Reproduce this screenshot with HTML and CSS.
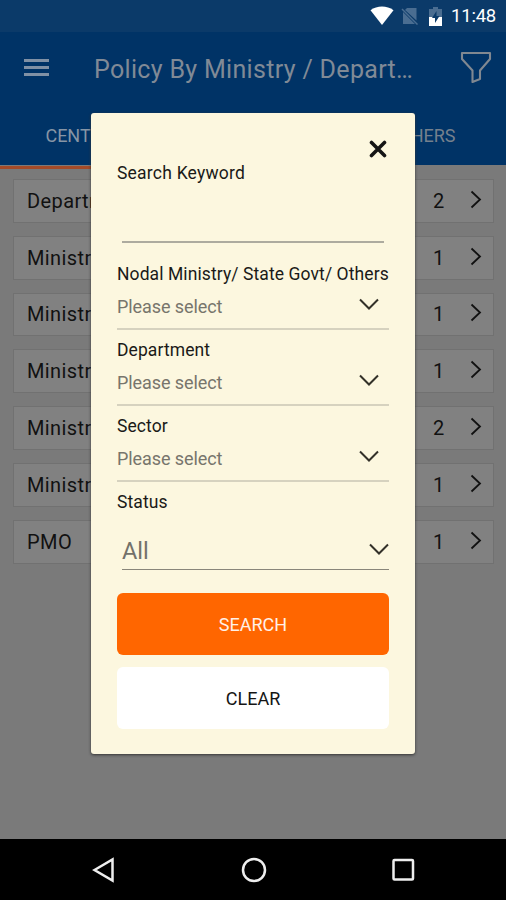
FILE: index.html
```html
<!DOCTYPE html>
<html lang="en">
<head>
<meta charset="utf-8">
<title>Policy By Ministry / Department</title>
<link rel="stylesheet" href="styles.css">
</head>
<body>
<div class="screen">
  <div class="status-bar">
    <svg class="wifi" width="24" height="20" viewBox="0 0 24 20"><path d="M.5 4.200C7-.7 17-.7 23.500 4.200L12 19z" fill="#fff"/></svg>
    <svg class="sim" width="18" height="18" viewBox="0 0 18 18"><path d="M6 1h9.500v12.500L4 3zM2 5l12 12H2z" fill="#4a6d91"/><path d="M1 2l15.500 15.500" stroke="#4a6d91" stroke-width="1.500"/></svg>
    <svg class="battery" width="13" height="19" viewBox="0 0 13 19"><path d="M4 0h5v2h4v17H0V2h4z" fill="#4a6d91"/><path d="M0 10h13v9H0z" fill="#fff"/><path d="M7.500 4L3 11h3v5l4.500-7h-3z" fill="#0b3a69"/></svg>
    <span class="time">11:48</span>
  </div>
  <header class="app-bar">
    <svg class="menu" width="25" height="18" viewBox="0 0 25 18"><path d="M0 1.500h25M0 8.500h25M0 15.500h25" stroke="#8091a5" stroke-width="3"/></svg>
    <h1 class="title">Policy By Ministry / Depart…</h1>
    <svg class="filter" width="32" height="33" viewBox="0 0 32 33"><path d="M2 2h28v6L20 19.500v8.500L12.500 31V19.500L2 8z" fill="none" stroke="#808891" stroke-width="2.100" stroke-linejoin="round"/></svg>
  </header>
  <nav class="tabs">
    <span class="tab tab-active">CENTRAL</span>
    <span class="tab">STATE</span>
    <span class="tab">OTHERS</span>
  </nav>
  <main class="list">
    <div class="row"><span class="name">Department</span><span class="count">2</span><svg class="next" width="12" height="19" viewBox="0 0 12 19"><path d="M1.500 1.500l8.500 8-8.500 8"/></svg></div>
    <div class="row"><span class="name">Ministry</span><span class="count">1</span><svg class="next" width="12" height="19" viewBox="0 0 12 19"><path d="M1.500 1.500l8.500 8-8.500 8"/></svg></div>
    <div class="row"><span class="name">Ministry</span><span class="count">1</span><svg class="next" width="12" height="19" viewBox="0 0 12 19"><path d="M1.500 1.500l8.500 8-8.500 8"/></svg></div>
    <div class="row"><span class="name">Ministry</span><span class="count">1</span><svg class="next" width="12" height="19" viewBox="0 0 12 19"><path d="M1.500 1.500l8.500 8-8.500 8"/></svg></div>
    <div class="row"><span class="name">Ministry</span><span class="count">2</span><svg class="next" width="12" height="19" viewBox="0 0 12 19"><path d="M1.500 1.500l8.500 8-8.500 8"/></svg></div>
    <div class="row"><span class="name">Ministry</span><span class="count">1</span><svg class="next" width="12" height="19" viewBox="0 0 12 19"><path d="M1.500 1.500l8.500 8-8.500 8"/></svg></div>
    <div class="row"><span class="name">PMO</span><span class="count">1</span><svg class="next" width="12" height="19" viewBox="0 0 12 19"><path d="M1.500 1.500l8.500 8-8.500 8"/></svg></div>
  </main>
  <footer class="nav-bar">
    <svg width="24" height="26" viewBox="0 0 24 26"><path d="M2.500 13L20.500 2.500v21z"/></svg>
    <svg width="26" height="26" viewBox="0 0 26 26"><circle cx="13" cy="13" r="11"/></svg>
    <svg width="24" height="26" viewBox="0 0 24 26"><rect x="2.500" y="3" width="19.500" height="19.500" rx="1"/></svg>
  </footer>
  <section class="dialog">
    <div class="close-row"><svg class="close" width="18" height="18" viewBox="0 0 18 18"><path d="M2.500 2.500l13 13M15.500 2.500l-13 13"/></svg></div>
    <div class="field keyword"><span class="label wide">Search Keyword</span></div>
    <div class="field"><span class="label">Nodal Ministry/ State Govt/ Others</span><div class="select"><span>Please select</span><svg class="down" width="20" height="13" viewBox="0 0 20 13"><path d="M1 1.500l9 9 9-9"/></svg></div></div>
    <div class="field"><span class="label">Department</span><div class="select"><span>Please select</span><svg class="down" width="20" height="13" viewBox="0 0 20 13"><path d="M1 1.500l9 9 9-9"/></svg></div></div>
    <div class="field"><span class="label">Sector</span><div class="select"><span>Please select</span><svg class="down" width="20" height="13" viewBox="0 0 20 13"><path d="M1 1.500l9 9 9-9"/></svg></div></div>
    <div class="field status"><span class="label">Status</span><div class="picker"><span>All</span><svg class="down" width="20" height="13" viewBox="0 0 20 13"><path d="M1 1.500l9 9 9-9"/></svg></div></div>
    <div class="button search">SEARCH</div>
    <div class="button clear">CLEAR</div>
  </section>
</div>
</body>
</html>
```
FILE: styles.css
```css
* { box-sizing: border-box; }
body { margin: 0; font-family: Roboto, "Liberation Sans", sans-serif; }
svg { display: block; flex: none; }
.screen { position: relative; width: 506px; height: 900px; background: #7a7a7a; overflow: hidden; display: flex; flex-direction: column; }
.status-bar { height: 32px; background: #0b3a69; display: flex; align-items: center; justify-content: flex-end; padding-right: 10px; color: #fff; }
.sim { margin-left: 7px; }
.battery { margin-left: 10px; }
.time { margin-left: 9px; font-size: 18.500px; line-height: 34px; width: 45px; white-space: nowrap; letter-spacing: -.2px; }
.app-bar { height: 73px; background: #003366; display: flex; align-items: center; padding: 0 14px 2px 24px; }
.title { margin: 4px 0 0 45px; flex: 1; font-size: 25px; font-weight: 400; color: #808a96; line-height: 32px; white-space: nowrap; letter-spacing: .32px; }
.tabs { height: 60px; background: #003366; display: grid; grid-template-columns: repeat(3, 1fr); color: #75808d; font-size: 18px; line-height: 61px; text-align: center; }
.tab-active { color: #8795a5; border-bottom: 3px solid #a44b28; }
.list { flex: 1; padding: 14px 12px 14px 13px; display: flex; flex-direction: column; gap: 13px; }
.row { height: 43.800px; flex: none; display: flex; align-items: center; padding: 0 11px 0 13px; background: #818181; border: 1px solid #717171; color: #111; font-size: 20px; }
.name { flex: 1; letter-spacing: .4px; }
.count { width: 12px; }
.next { margin-left: 25px; margin-top: -3px; fill: none; stroke: #111; stroke-width: 1.800; }
.nav-bar { height: 61px; background: #000; display: flex; justify-content: space-between; align-items: center; padding: 0 91px 0 92px; }
.nav-bar svg { fill: none; stroke: #eee; stroke-width: 2.500; }
.dialog { position: absolute; left: 91px; top: 113px; width: 324px; height: 641px; background: #fcf7df; border-radius: 3px; box-shadow: 0 1px 3px #333; padding: 27px 26px 0; }
.close-row { height: 21px; display: flex; justify-content: flex-end; padding-right: 2px; }
.close { stroke: #151515; stroke-width: 3.600; stroke-linecap: round; }
.field { height: 76px; }
.label { display: block; line-height: 23px; font-size: 17.500px; letter-spacing: .09px; color: #1a1a18; white-space: nowrap; }
.wide { letter-spacing: .22px; line-height: 24px; }
.keyword { height: 102px; display: flex; flex-direction: column; }
.keyword::after { content: ""; height: 2px; background: #adab9f; margin: 56px 5px 0; }
.select { height: 44px; border-bottom: 2px solid #d6d2bf; display: flex; justify-content: space-between; align-items: center; padding: 0 10px 2px 0; font-size: 18px; letter-spacing: -.08px; color: #77756c; }
.down { fill: none; stroke: #333129; stroke-width: 2; margin-top: -3px; }
.status { height: 102px; }
.picker { margin: 16px 0 0 5px; height: 40px; border-bottom: 1px solid #89867a; display: flex; align-items: center; justify-content: space-between; font-size: 23.500px; color: #73716a; padding-top: 3px; }
.button { height: 62px; border-radius: 6px; display: flex; align-items: center; justify-content: center; font-size: 18px; }
.search { background: #ff6600; color: #fff0e8; }
.clear { background: #fff; color: #151515; margin-top: 12px; }
```
